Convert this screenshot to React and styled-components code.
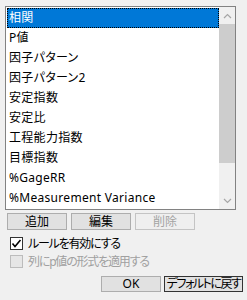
import React from "react";
import styled, { createGlobalStyle } from "styled-components";

const GlobalStyle = createGlobalStyle`
  html, body {
    margin: 0;
    padding: 0;
    background: #f0f0f0;
  }
  body {
    font-family: "Noto Sans", "Noto Sans CJK JP", sans-serif;
    font-size: 12px;
    font-feature-settings: "palt";
    color: #000;
  }
`;

const Dialog = styled.div`
  width: 247px;
  height: 300px;
  box-sizing: border-box;
  padding: 6px 0 0 5px;
  display: flex;
  flex-direction: column;
`;

const ListBox = styled.div`
  width: 231px;
  height: 204px;
  box-sizing: border-box;
  border: 1px solid #828282;
  background: #fff;
  display: flex;
`;

const Items = styled.ul`
  flex: 1;
  list-style: none;
  margin: 0;
  padding: 1px 0 1px 1px;
  overflow: hidden;
`;

const Item = styled.li`
  height: 20px;
  box-sizing: border-box;
  padding-left: 1px;
  line-height: 18px;
  letter-spacing: 0.3px;
  white-space: nowrap;
  background: ${(p) => (p.$selected ? "#0078d7" : "transparent")};
  color: ${(p) => (p.$selected ? "#fff" : "#000")};
  border: 1px dotted ${(p) => (p.$selected ? "#000" : "transparent")};
`;

const ScrollBar = styled.div`
  width: 16px;
  display: flex;
  flex-direction: column;
  background: #f0f0f0;
`;

const ArrowButton = styled.div`
  height: 17px;
  display: flex;
  align-items: center;
  justify-content: center;
`;

const Thumb = styled.div`
  height: 139px;
  background: #cdcdcd;
`;

const Track = styled.div`
  flex: 1;
`;

const ButtonRow = styled.div`
  display: flex;
  gap: 4px;
  margin: 3px 0 0 2px;
`;

const Button = styled.button`
  width: ${(p) => p.$w || 60}px;
  height: ${(p) => p.$h || 17}px;
  box-sizing: border-box;
  padding: 0;
  margin: 0;
  font: inherit;
  font-size: 12px;
  line-height: 1;
  letter-spacing: ${(p) => (p.$tight ? "-1.5px" : "0")};
  white-space: nowrap;
  overflow: visible;
  display: flex;
  align-items: center;
  justify-content: center;
  background: ${(p) => (p.disabled ? "#efefef" : "#e1e1e1")};
  border: 1px solid
    ${(p) => (p.disabled ? "#c4c4c4" : p.$focus ? "#333" : "#adadad")};
  color: ${(p) => (p.disabled ? "#a3a3a3" : "#000")};
`;

const CheckRow = styled.label`
  display: flex;
  align-items: center;
  gap: 5px;
  height: 18px;
  margin-left: 5px;
  margin-top: ${(p) => p.$top || 0}px;
  color: ${(p) => (p.$disabled ? "#a0a0a0" : "#000")};
  letter-spacing: -1.2px;
  white-space: nowrap;
`;

const Box = styled.span`
  width: 13px;
  height: 13px;
  box-sizing: border-box;
  border: 1px solid ${(p) => (p.$disabled ? "#bcbcbc" : "#333")};
  background: ${(p) => (p.$disabled ? "#e6e6e6" : "#fff")};
  display: flex;
  align-items: center;
  justify-content: center;
`;

const Footer = styled.div`
  display: flex;
  justify-content: flex-end;
  gap: 3px;
  margin-top: 6px;
  padding-right: 4px;
`;

const items = [
  "相関",
  "P値",
  "因子パターン",
  "因子パターン2",
  "安定指数",
  "安定比",
  "工程能力指数",
  "目標指数",
  "%GageRR",
  "%Measurement Variance",
];

function Chevron({ down }) {
  return (
    <svg width="9" height="6" viewBox="0 0 9 6">
      <polyline
        points={down ? "1,1 4.5,4.5 8,1" : "1,5 4.5,1.5 8,5"}
        fill="none"
        stroke="#a6a6a6"
        strokeWidth="1.2"
      />
    </svg>
  );
}

export default function App() {
  return (
    <>
      <GlobalStyle />
      <Dialog>
        <ListBox>
          <Items>
            {items.map((t, i) => (
              <Item key={t} $selected={i === 0}>
                {t}
              </Item>
            ))}
          </Items>
          <ScrollBar>
            <ArrowButton>
              <Chevron />
            </ArrowButton>
            <Thumb />
            <Track />
            <ArrowButton>
              <Chevron down />
            </ArrowButton>
          </ScrollBar>
        </ListBox>
        <ButtonRow>
          <Button>追加</Button>
          <Button>編集</Button>
          <Button disabled>削除</Button>
        </ButtonRow>
        <CheckRow $top={4}>
          <Box>
            <svg width="11" height="11" viewBox="0 0 11 11">
              <polyline
                points="1.5,5.5 4,8.5 9.5,2"
                fill="none"
                stroke="#000"
                strokeWidth="1.6"
              />
            </svg>
          </Box>
          ルールを有効にする
        </CheckRow>
        <CheckRow $disabled>
          <Box $disabled />
          列にp値の形式を適用する
        </CheckRow>
        <Footer>
          <Button $h={16}>OK</Button>
          <Button $h={16} $w={79} $focus $tight>
            デフォルトに戻す
          </Button>
        </Footer>
      </Dialog>
    </>
  );
}
